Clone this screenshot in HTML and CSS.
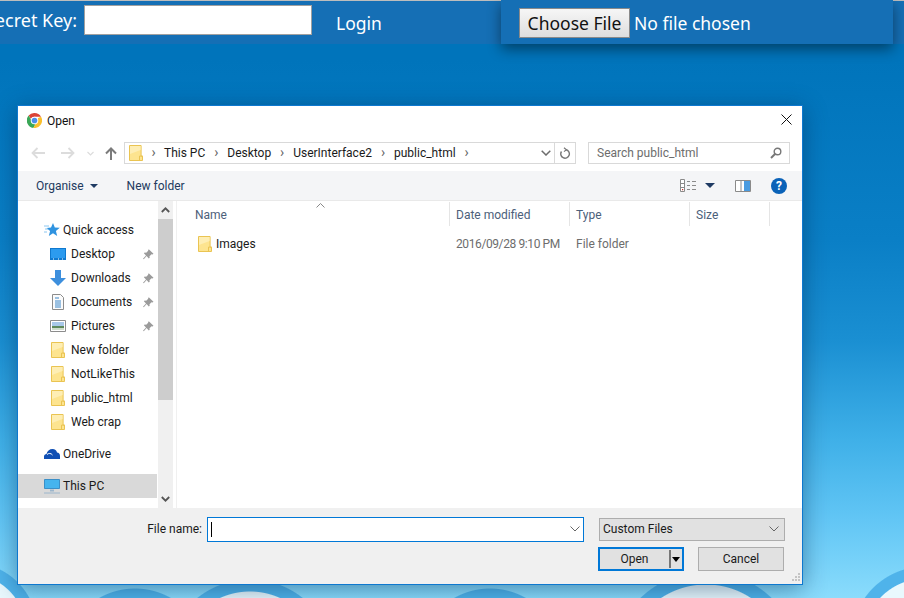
FILE: index.html
```html
<!DOCTYPE html>
<html lang="en">
<head>
    <meta charset="UTF-8">
    <meta name="viewport" content="width=device-width, initial-scale=1.0">
    <title>Open file</title>
    <link rel="stylesheet" href="styles.css">
</head>
<body>
    <svg class="defs" width="0" height="0">
        <symbol id="folder" viewBox="0 0 14 16">
            <path d="M.5.5h11.6v10.6h1.4v4.4H.5z" fill="#fde48f" stroke="#eac452"/>
            <path d="M1 1h10.6v4L1 9z" fill="#feeeb4"/>
            <path d="M10.5 15.5v-4.4h3" fill="none" stroke="#eac452"/>
        </symbol>
        <symbol id="pin" viewBox="0 0 11 11">
            <path d="M6 .5l4.500 4.200-1 .8-1-.3-2 2 .2 1.600-.9.7-2.200-2.400L.8 10.300 0 9.800l3-3.400L.9 4.300l.8-.9 1.500.3 2-2-.1-1z" fill="#9b9b9b"/>
        </symbol>
    </svg>

    <header class="topbar">
        <form class="login">
            <label class="login-label">Secret Key:</label>
            <div class="key-box"></div>
            <span class="login-link">Login</span>
        </form>
        <div class="upload">
            <button type="button" class="choose">Choose File</button>
            <span class="chosen">No file chosen</span>
        </div>
    </header>

    <div class="dialog">
        <div class="title-row">
            <svg class="chrome" width="15" height="15" viewBox="0 0 32 32">
                <path d="M16 0a16 16 0 0 1 13.900 8H16a8 8 0 0 0-7.500 5L3.500 5.500A16 16 0 0 1 16 0z" fill="#db4437"/>
                <path d="M3.500 5.500l6 10.500a8 8 0 0 0 8.500 7.800L13.500 31.800A16 16 0 0 1 3.500 5.500z" fill="#3aa757"/>
                <path d="M29.900 8A16 16 0 0 1 13.500 31.800l6-10.500A8 8 0 0 0 22.500 11l7.400-3z" fill="#fbc02d"/>
                <circle cx="16" cy="16" r="8" fill="#fff"/>
                <circle cx="16" cy="16" r="6" fill="#4d8fe8"/>
            </svg>
            <span class="title">Open</span>
            <svg class="close" width="11" height="11" viewBox="0 0 11 11"><path d="M.5.5l10 10M10.500.5l-10 10" stroke="#111" fill="none"/></svg>
        </div>

        <div class="nav-row">
            <div class="nav-btns">
                <svg width="14" height="12" viewBox="0 0 14 12"><path d="M6.500 1L1.500 6l5 5M2 6h12" fill="none" stroke="#dcdcdc" stroke-width="1.800"/></svg>
                <svg class="nav-fwd" width="14" height="12" viewBox="0 0 14 12"><path d="M7.500 1l5 5-5 5M12 6H0" fill="none" stroke="#dcdcdc" stroke-width="1.800"/></svg>
                <svg class="nav-down" width="7" height="5" viewBox="0 0 7 5"><path d="M.5 1l3 3 3-3" fill="none" stroke="#dcdcdc" stroke-width="1.200"/></svg>
                <svg class="nav-up" width="12" height="13" viewBox="0 0 12 13"><path d="M1 6.500l5-5 5 5M6 2v11" fill="none" stroke="#7b7b7b" stroke-width="2"/></svg>
            </div>
            <div class="address">
                <svg class="addr-folder" width="14" height="16"><use href="#folder"/></svg>
                <span class="crumb-sep">›</span><span class="crumb">This PC</span>
                <span class="crumb-sep">›</span><span class="crumb">Desktop</span>
                <span class="crumb-sep">›</span><span class="crumb">UserInterface2</span>
                <span class="crumb-sep">›</span><span class="crumb">public_html</span>
                <span class="crumb-sep">›</span>
                <svg class="addr-chev" width="10" height="6" viewBox="0 0 10 6"><path d="M.7.7L5 5l4.300-4.300" fill="none" stroke="#6d6d6d" stroke-width="1.500"/></svg>
                <div class="addr-refresh">
                    <svg width="11" height="12" viewBox="0 0 11 12"><path d="M4 .8l2.400 1.900L4 4.600" fill="none" stroke="#777" stroke-width="1.200"/><path d="M6 2.700A4.300 4.300 0 1 1 1.500 4.500" fill="none" stroke="#777" stroke-width="1.400"/></svg>
                </div>
            </div>
            <div class="search">
                <span class="search-text">Search public_html</span>
                <svg width="12" height="12" viewBox="0 0 12 12"><circle cx="7.500" cy="4.500" r="3.300" fill="none" stroke="#777" stroke-width="1.400"/><path d="M5 7l-4 4" stroke="#777" stroke-width="2"/></svg>
            </div>
        </div>

        <div class="toolbar">
            <span class="tool organise">Organise</span>
            <span class="caret"></span>
            <span class="tool new-folder">New folder</span>
            <svg class="views" width="16" height="13" viewBox="0 0 16 13">
                <path d="M.5.5h4v12h-4zM.5 4.500h4M.5 8.500h4" fill="#fff" stroke="#8a8a8a"/>
                <path d="M7 2.500h3M12 2.500h4M7 6.500h3M12 6.500h4M7 10.500h3M12 10.500h4" stroke="#8a8a8a"/>
                <path d="M2 10h1.200v1.200H2z" fill="#c8302a"/>
            </svg>
            <span class="caret caret-views"></span>
            <svg class="pane" width="16" height="12" viewBox="0 0 16 12">
                <path d="M.5.500h15v11H.5z" fill="#fff" stroke="#8a8a8a"/>
                <path d="M6 0v12" stroke="#8a8a8a"/>
                <path d="M9 1h6v10H9z" fill="#4a9be0"/>
            </svg>
            <span class="help">?</span>
        </div>

        <div class="browser">
            <nav class="tree">
                <div class="tree-row tree-top">
                    <svg width="16" height="14" viewBox="0 0 16 14"><path d="M9 0l1.800 4.500 5 .3-3.900 3.100L13.200 13 9 10.200 4.800 13l1.300-5L2.500 5l4.500-.5z" fill="#2f93e0"/><path d="M0 3h5M1 6h3M0 9h3" stroke="#8cc6f0"/></svg>
                    <span>Quick access</span>
                </div>
                <div class="tree-row tree-sub">
                    <svg width="16" height="12" viewBox="0 0 16 12"><path d="M0 0h16v12H0z" fill="#0f79cf"/><path d="M1 1h14v9H1z" fill="#2c9bef"/><path d="M3 11h1M8 11h1M12 11h1" stroke="#fff"/></svg>
                    <span>Desktop</span>
                    <svg class="pin" width="11" height="11"><use href="#pin"/></svg>
                </div>
                <div class="tree-row tree-sub">
                    <svg width="16" height="16" viewBox="0 0 16 16"><path d="M5 0h6v8h5l-8 8-8-8h5z" fill="#3d8fdd"/></svg>
                    <span>Downloads</span>
                    <svg class="pin" width="11" height="11"><use href="#pin"/></svg>
                </div>
                <div class="tree-row tree-sub">
                    <svg width="16" height="16" viewBox="0 0 16 16"><path d="M2.500.5h8l3 3v12h-11z" fill="#fbfbfb" stroke="#8c8c8c"/><path d="M5 4h4M5 7h6M5 9h6M5 11h6M5 13h6" stroke="#3a86c8"/></svg>
                    <span>Documents</span>
                    <svg class="pin" width="11" height="11"><use href="#pin"/></svg>
                </div>
                <div class="tree-row tree-sub">
                    <svg width="16" height="12" viewBox="0 0 16 12"><path d="M.5.500h15v11H.5z" fill="#fff" stroke="#8c8c8c"/><path d="M2 2h12v4H2z" fill="#a8c8e8"/><path d="M2 6h12v2H2z" fill="#5f8a5c"/><path d="M2 8h12v2H2z" fill="#cfdccc"/></svg>
                    <span>Pictures</span>
                    <svg class="pin" width="11" height="11"><use href="#pin"/></svg>
                </div>
                <div class="tree-row tree-sub"><svg width="14" height="16"><use href="#folder"/></svg><span>New folder</span></div>
                <div class="tree-row tree-sub"><svg width="14" height="16"><use href="#folder"/></svg><span>NotLikeThis</span></div>
                <div class="tree-row tree-sub"><svg width="14" height="16"><use href="#folder"/></svg><span>public_html</span></div>
                <div class="tree-row tree-sub"><svg width="14" height="16"><use href="#folder"/></svg><span>Web crap</span></div>
                <div class="tree-row tree-top tree-gap">
                    <svg width="16" height="10" viewBox="0 0 16 10"><path d="M0 10V7.500C0 6 1.200 5 2.500 5 3 2 5.500 0 8.500 0c2.500 0 4 1.500 4.500 3.500 1.800 0 3 1.500 3 3.500v3z" fill="#0f4fb4"/><path d="M3 5.500C4.500 4 7 4 8.500 6" fill="none" stroke="#fff"/></svg>
                    <span>OneDrive</span>
                </div>
                <div class="tree-row tree-top tree-gap tree-selected">
                    <svg width="16" height="15" viewBox="0 0 16 15"><path d="M.5.500h15v9H.5z" fill="#45b4ee" stroke="#3b8fc7"/><path d="M6 10.500h4v2H6z" fill="#9cb6cc"/><path d="M0 14h16" stroke="#9cb6cc"/></svg>
                    <span>This PC</span>
                </div>
            </nav>
            <div class="scrollbar">
                <div class="scroll-btn"><svg width="9" height="6" viewBox="0 0 9 6"><path d="M.8 5l3.700-3.700L8.200 5" fill="none" stroke="#555" stroke-width="1.800"/></svg></div>
                <div class="scroll-thumb"></div>
                <div class="scroll-rest"></div>
                <div class="scroll-btn"><svg width="9" height="6" viewBox="0 0 9 6"><path d="M.8 1l3.700 3.700L8.200 1" fill="none" stroke="#555" stroke-width="1.800"/></svg></div>
            </div>
            <section class="files">
                <div class="col-head">
                    <span class="col col-name">Name
                        <svg class="sort" width="9" height="5" viewBox="0 0 9 5"><path d="M.5 4.500l4-4 4 4" fill="none" stroke="#888"/></svg>
                    </span>
                    <span class="col col-date">Date modified</span>
                    <span class="col col-type">Type</span>
                    <span class="col col-size">Size</span>
                </div>
                <div class="file-row">
                    <span class="cell cell-name"><svg width="14" height="16"><use href="#folder"/></svg>Images</span>
                    <span class="cell cell-date">2016/09/28 9:10 PM</span>
                    <span class="cell cell-type">File folder</span>
                </div>
            </section>
        </div>

        <footer class="bottom">
            <div class="name-row">
                <label class="name-label">File name:</label>
                <div class="name-box">
                    <span class="text-caret"></span>
                    <svg width="10" height="6" viewBox="0 0 10 6"><path d="M.5.500L5 5 9.500.5" fill="none" stroke="#666"/></svg>
                </div>
                <div class="type-box">
                    <span>Custom Files</span>
                    <svg width="10" height="6" viewBox="0 0 10 6"><path d="M.5.500L5 5 9.500.5" fill="none" stroke="#666"/></svg>
                </div>
            </div>
            <div class="btn-row">
                <div class="btn btn-open">
                    <span class="btn-label">Open</span>
                    <span class="btn-drop"></span>
                </div>
                <div class="btn btn-cancel">Cancel</div>
            </div>
            <svg class="grip" width="10" height="10" viewBox="0 0 10 10"><path d="M7 0h2v2H7zM4 3h2v2H4zM7 3h2v2H7zM1 6h2v2H1zM4 6h2v2H4zM7 6h2v2H7z" fill="#c4c4c4"/></svg>
        </footer>
    </div>
</body>
</html>
```

FILE: styles.css
```css
*{
    margin: 0px;
    padding: 0px;
    box-sizing: border-box;
}
html, body{
    height: 598px;
    overflow: hidden;
}
body{
    font-family: Roboto, 'Open Sans', sans-serif;
    font-size: 12px;
    color: #1a1a1a;
    background-color: #0077bd;
    background-image:
        radial-gradient(circle at -30px 630px, #e9f8fd 55px, #4fb3ea 56px, #4fb3ea 67px, transparent 68px),
        radial-gradient(circle at 135px 661px, #4fb3ea 72px, transparent 73px),
        radial-gradient(circle at 250px 664px, #e9f8fd 72px, #4fb3ea 73px, #4fb3ea 84px, transparent 85px),
        radial-gradient(circle at 490px 661px, #4fb3ea 72px, transparent 73px),
        radial-gradient(circle at 706px 666px, #e9f8fd 81px, #4fb3ea 82px, #4fb3ea 94px, transparent 95px),
        radial-gradient(circle at 925px 640px, #e9f8fd 61px, #4fb3ea 62px, #4fb3ea 73px, transparent 74px),
        linear-gradient(180deg, #0074bb 0px, #0074bb 60px, #0a7fc6 240px, #1a8fd2 340px, #3fb0e8 440px, #62c6f5 520px, #8adcfc 598px);
}
.defs{
    position: absolute;
}

/* barra de cima */
.topbar{
    height: 44px;
    display: flex;
    align-items: stretch;
    background-color: #156fb5;
    border-top: 1px solid #bdbdbd;
    color: #fff;
    font-family: 'Noto Sans', sans-serif;
    font-size: 17.5px;
}
.login{
    display: flex;
    align-items: center;
    margin-left: -22px;
}
.login-label{
    width: 99px;
    margin-right: 7px;
    white-space: nowrap;
    text-align: right;
    font-size: 18px;
    padding-bottom: 5px;
}
.key-box{
    width: 228px;
    height: 30px;
    margin-top: -6px;
    background-color: #fff;
    border: 1px solid #a0a0a0;
}
.login-link{
    margin-left: 24px;
    padding-top: 1px;
}
.upload{
    width: 392px;
    margin-left: auto;
    margin-right: 11px;
    margin-top: -1px;
    padding-left: 18px;
    display: flex;
    align-items: center;
    background-color: #156fb5;
    box-shadow: 0 5px 14px rgba(0, 0, 0, .45);
    position: relative;
}
.choose{
    width: 111px;
    height: 30px;
    margin-top: 2px;
    font-family: inherit;
    font-size: 17.5px;
    color: #111;
    background: linear-gradient(#f6f6f6, #dedede);
    border: 1px solid #8a8a8a;
}
.chosen{
    margin-left: 4px;
    margin-top: 2px;
}

/* janela */
.dialog{
    position: absolute;
    left: 17px;
    top: 105px;
    width: 786px;
    height: 480px;
    display: flex;
    flex-direction: column;
    background-color: #fff;
    border: 1px solid #0e78cf;
    box-shadow: 0 4px 22px rgba(0, 40, 80, .45);
}
.title-row{
    height: 29px;
    flex: none;
    display: flex;
    align-items: center;
    padding-left: 9px;
    padding-right: 10px;
}
.chrome{
    margin-right: 5px;
}
.title{
    color: #111;
}
.close{
    margin-left: auto;
    margin-top: -2px;
}

.nav-row{
    height: 36px;
    flex: none;
    display: flex;
    padding-top: 7px;
}
.nav-btns{
    width: 106px;
    height: 22px;
    flex: none;
    display: flex;
    align-items: center;
    padding-left: 13px;
}
.nav-fwd{
    margin-left: 16px;
}
.nav-down{
    margin-left: 12px;
}
.nav-up{
    margin-left: 11px;
}
.address{
    width: 452px;
    height: 22px;
    display: flex;
    align-items: center;
    border: 1px solid #d9d9d9;
    padding-left: 4px;
}
.crumb-sep{
    width: 22px;
    text-align: center;
    color: #666;
    font-size: 14px;
    line-height: 16px;
    margin-bottom: 2px;
}
.address .addr-folder + .crumb-sep{
    width: 21px;
}
.crumb{
    white-space: nowrap;
}
.addr-chev{
    margin-left: auto;
    margin-right: 3px;
}
.addr-refresh{
    width: 21px;
    height: 20px;
    display: flex;
    align-items: center;
    justify-content: center;
    border-left: 1px solid #d9d9d9;
}
.search{
    width: 202px;
    height: 22px;
    margin-left: 12px;
    display: flex;
    align-items: center;
    justify-content: space-between;
    border: 1px solid #d9d9d9;
    padding-left: 8px;
    padding-right: 7px;
    color: #6d6d6d;
}

.toolbar{
    height: 30px;
    flex: none;
    display: flex;
    align-items: center;
    background-color: #f4f5f7;
    border-bottom: 1px solid #e9e9e9;
    padding-left: 18px;
}
.tool{
    color: #223a5e;
}
.caret{
    width: 0;
    height: 0;
    margin-left: 6px;
    border-left: 4px solid transparent;
    border-right: 4px solid transparent;
    border-top: 4px solid #1f3a63;
}
.new-folder{
    margin-left: 29px;
}
.views{
    margin-left: auto;
}
.caret-views{
    margin-left: 9px;
    border-left-width: 5px;
    border-right-width: 5px;
    border-top-width: 5px;
}
.pane{
    margin-left: 20px;
}
.help{
    width: 16px;
    height: 16px;
    margin-left: 20px;
    margin-right: 15px;
    border-radius: 50%;
    background-color: #0a62b8;
    color: #fff;
    font-size: 12px;
    font-weight: bold;
    line-height: 16px;
    text-align: center;
}

.browser{
    flex: 1;
    min-height: 0;
    display: flex;
}
.tree{
    width: 140px;
    flex: none;
    padding-top: 17px;
}
.tree-row{
    height: 24px;
    display: flex;
    align-items: center;
    white-space: nowrap;
    position: relative;
}
.tree-top{
    padding-left: 26px;
    gap: 3px;
}
.tree-sub{
    padding-left: 32px;
    gap: 5px;
}
.tree-sub svg:first-child{
    width: 16px;
}
.tree-gap{
    margin-top: 8px;
}
.tree-selected{
    background-color: #d9d9d9;
    margin-right: 1px;
}
.tree-row .pin{
    position: absolute;
    left: 125px;
    top: 7px;
}
.scrollbar{
    width: 15px;
    flex: none;
    display: flex;
    flex-direction: column;
    background-color: #f0f0f0;
}
.scroll-btn{
    height: 18px;
    display: flex;
    align-items: center;
    justify-content: center;
}
.scroll-thumb{
    height: 181px;
    background-color: #cdcdcd;
}
.scroll-rest{
    flex: 1;
}
.files{
    flex: 1;
    margin-left: 3px;
    border-left: 1px solid #f0f0f0;
}
.col-head{
    height: 26px;
    display: flex;
    align-items: center;
    color: #4c607a;
}
.col{
    height: 24px;
    line-height: 26px;
    padding-left: 6px;
    border-right: 1px solid #e5e5e5;
    position: relative;
}
.col-name{
    width: 273px;
    padding-left: 18px;
}
.col-date, .col-type{
    width: 120px;
}
.col-size{
    width: 80px;
}
.sort{
    position: absolute;
    left: 139px;
    top: 1px;
}
.file-row{
    height: 24px;
    margin-top: 5px;
    display: flex;
    align-items: center;
    color: #6d6d6d;
}
.cell{
    padding-left: 6px;
    width: 120px;
    white-space: nowrap;
}
.cell-name{
    width: 273px;
    padding-left: 21px;
    display: flex;
    align-items: center;
    gap: 4px;
    color: #1a1a1a;
}
.cell-date{
    letter-spacing: -.4px;
}

.bottom{
    height: 76px;
    flex: none;
    background-color: #f0f0f0;
    padding-top: 9px;
    position: relative;
}
.name-row{
    height: 24px;
    display: flex;
    align-items: center;
}
.name-label{
    width: 184px;
    margin-right: 5px;
    text-align: right;
    white-space: nowrap;
}
.name-box{
    width: 377px;
    height: 25px;
    display: flex;
    align-items: center;
    justify-content: space-between;
    background-color: #fff;
    border: 1px solid #0078d7;
    padding-left: 3px;
    padding-right: 3px;
}
.text-caret{
    width: 1px;
    height: 15px;
    background-color: #000;
}
.type-box{
    width: 186px;
    height: 23px;
    margin-left: 15px;
    display: flex;
    align-items: center;
    justify-content: space-between;
    background-color: #e1e1e1;
    border: 1px solid #adadad;
    padding-left: 3px;
    padding-right: 5px;
}
.btn-row{
    display: flex;
    margin-top: 6px;
    padding-left: 580px;
}
.btn{
    height: 24px;
    width: 86px;
    display: flex;
    align-items: center;
    justify-content: center;
    background-color: #e1e1e1;
    border: 1px solid #adadad;
}
.btn-open{
    border: 2px solid #0078d7;
    justify-content: flex-start;
}
.btn-label{
    width: 69px;
    text-align: center;
}
.btn-drop{
    width: 13px;
    height: 18px;
    position: relative;
    border-left: 2px solid #777;
}
.btn-drop::after{
    content: "";
    position: absolute;
    left: 1px;
    top: 7px;
    border-left: 4px solid transparent;
    border-right: 4px solid transparent;
    border-top: 5px solid #000;
}
.btn-cancel{
    margin-left: 14px;
}
.grip{
    position: absolute;
    right: 1px;
    bottom: 1px;
}
```
